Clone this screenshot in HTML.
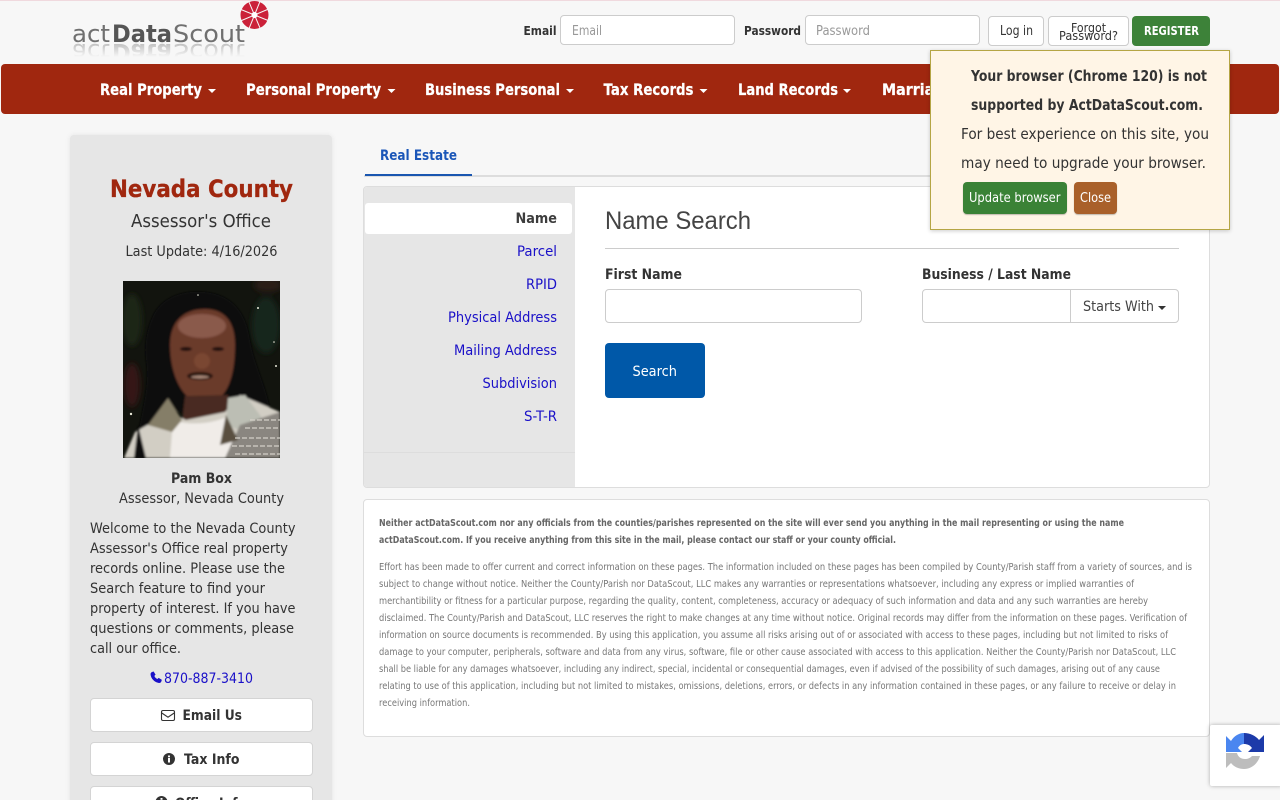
<!DOCTYPE html>
<html lang="en">
<head>
<meta charset="utf-8">
<title>actDataScout - Nevada County</title>
<style>
html,body{margin:0;padding:0;width:1280px;height:800px;overflow:hidden;background:#f7f7f7}
#page{position:relative;width:1280px;height:800px;overflow:hidden;background:#f7f7f7}
.b{position:absolute;box-sizing:border-box}
svg{position:absolute;left:0;top:0}
text{font-family:"DejaVu Sans","Liberation Sans",sans-serif;fill:#333}
.s{font-weight:bold}
.nav text{font-size:16px;font-weight:bold;fill:#fff;stroke:#fff;stroke-width:.25px}
.lnk{fill:#1a10c8;font-size:14px}
.d{font-size:9.5px;fill:#777}
.db{font-size:9.5px;font-weight:bold;fill:#666}
.p{font-size:14px}
.lg{font-size:24px;fill:#707070}
</style>
</head>
<body>
<div id="page">
<div class="b" style="left:0;top:0;width:1280px;height:1px;background:#f0d9de"></div>
<div class="b" style="left:1px;top:64px;width:1278px;height:50px;background:#a0270f;border-radius:4px"></div>

<div class="b" style="left:560px;top:15px;width:175px;height:30px;background:#fff;border:1px solid #ccc;border-radius:4px"></div>
<div class="b" style="left:805px;top:15px;width:175px;height:30px;background:#fff;border:1px solid #ccc;border-radius:4px"></div>
<div class="b" style="left:988px;top:16px;width:56px;height:30px;background:#fff;border:1px solid #ccc;border-radius:4px"></div>
<div class="b" style="left:1048px;top:16px;width:81px;height:30px;background:#fff;border:1px solid #ccc;border-radius:4px"></div>
<div class="b" style="left:1132px;top:16px;width:78px;height:30px;background:#3d8239;border-radius:4px"></div>

<div class="b" style="left:70px;top:135px;width:262px;height:680px;background:#e6e6e6;border-radius:4px;box-shadow:0 0 6px rgba(0,0,0,.08)"></div>
<div class="b" style="left:90px;top:698px;width:223px;height:34px;background:#fff;border:1px solid #d4d4d4;border-radius:4px"></div>
<div class="b" style="left:90px;top:742px;width:223px;height:34px;background:#fff;border:1px solid #d4d4d4;border-radius:4px"></div>
<div class="b" style="left:90px;top:786px;width:223px;height:34px;background:#fff;border:1px solid #d4d4d4;border-radius:4px"></div>

<div class="b" style="left:364px;top:175px;width:845px;height:2px;background:#ddd"></div>
<div class="b" style="left:365px;top:174px;width:107px;height:2px;background:#1a56b0"></div>

<div class="b" style="left:363px;top:186px;width:847px;height:302px;background:#fff;border:1px solid #ddd;border-radius:4px;overflow:hidden">
  <div class="b" style="left:0;top:0;width:211px;height:300px;background:#e6e6e6"></div>
  <div class="b" style="left:1px;top:16px;width:207px;height:31px;background:#fff;border-radius:3px"></div>
  <div class="b" style="left:0;top:265px;width:211px;height:1px;background:#ddd"></div>
</div>
<div class="b" style="left:605px;top:248px;width:574px;height:1px;background:#ccc"></div>
<div class="b" style="left:605px;top:289px;width:257px;height:34px;background:#fff;border:1px solid #ccc;border-radius:4px"></div>
<div class="b" style="left:922px;top:289px;width:257px;height:34px;background:#fff;border:1px solid #ccc;border-radius:4px"></div>
<div class="b" style="left:1070px;top:289px;width:1px;height:34px;background:#ccc"></div>
<div class="b" style="left:605px;top:343px;width:100px;height:55px;background:#0058a8;border-radius:4px"></div>

<div class="b" style="left:363px;top:499px;width:847px;height:238px;background:#fff;border:1px solid #ddd;border-radius:4px"></div>

<svg width="1280" height="800" viewBox="0 0 1280 800" xmlns="http://www.w3.org/2000/svg">
<defs>
<linearGradient id="fade" gradientUnits="userSpaceOnUse" x1="0" y1="43" x2="0" y2="29">
<stop offset="0" stop-color="#777" stop-opacity=".45"/><stop offset="1" stop-color="#777" stop-opacity="0"/>
</linearGradient>
<clipPath id="ph"><rect x="123" y="281" width="157" height="177"/></clipPath>
<filter id="bl" x="-10%" y="-10%" width="120%" height="120%"><feGaussianBlur stdDeviation="1"/></filter>
<filter id="bl2" x="-30%" y="-30%" width="160%" height="160%"><feGaussianBlur stdDeviation="3"/></filter>
</defs>

<!-- logo -->
<text class="lg" x="72" y="42" textLength="38" lengthAdjust="spacingAndGlyphs">act</text>
<text class="lg s" x="112" y="42" textLength="60" lengthAdjust="spacingAndGlyphs" style="fill:#555">Data</text>
<text class="lg" x="173" y="42" textLength="72" lengthAdjust="spacingAndGlyphs">Scout</text>
<g transform="translate(0,86) scale(1,-1)">
<text class="lg" x="72" y="42" textLength="38" lengthAdjust="spacingAndGlyphs" style="fill:url(#fade)">act</text>
<text class="lg s" x="112" y="42" textLength="60" lengthAdjust="spacingAndGlyphs" style="fill:url(#fade)">Data</text>
<text class="lg" x="173" y="42" textLength="72" lengthAdjust="spacingAndGlyphs" style="fill:url(#fade)">Scout</text>
</g>
<g transform="translate(254.5,15)">
<circle r="14" fill="#cb2139"/>
<g stroke="#f7f7f7" stroke-width="1">
<path d="M0 -15V15M-15 0H15M-10.600 -10.600L10.600 10.600M-10.600 10.600L10.600 -10.600" transform="rotate(22)"/>
</g>
<circle r="3" fill="#fff"/>
</g>

<!-- login -->
<text class="s" x="523.5" y="35" font-size="12" textLength="33" lengthAdjust="spacingAndGlyphs">Email</text>
<text x="572" y="35" font-size="13" style="fill:#999" textLength="30" lengthAdjust="spacingAndGlyphs">Email</text>
<text class="s" x="744" y="35" font-size="12" textLength="57" lengthAdjust="spacingAndGlyphs">Password</text>
<text x="816" y="35" font-size="13" style="fill:#999" textLength="54" lengthAdjust="spacingAndGlyphs">Password</text>
<text x="1000" y="35" font-size="13" textLength="33" lengthAdjust="spacingAndGlyphs">Log in</text>
<text x="1071" y="32" font-size="12" textLength="35" lengthAdjust="spacingAndGlyphs">Forgot</text>
<text x="1059" y="40" font-size="12" textLength="59" lengthAdjust="spacingAndGlyphs">Password?</text>
<text class="s" x="1144" y="35" font-size="12" style="fill:#fff" textLength="55" lengthAdjust="spacingAndGlyphs">REGISTER</text>

<!-- nav -->
<g class="nav">
<text x="100" y="95" textLength="102" lengthAdjust="spacingAndGlyphs">Real Property</text>
<text x="246" y="95" textLength="135" lengthAdjust="spacingAndGlyphs">Personal Property</text>
<text x="425" y="95" textLength="135" lengthAdjust="spacingAndGlyphs">Business Personal</text>
<text x="603.5" y="95" textLength="90" lengthAdjust="spacingAndGlyphs">Tax Records</text>
<text x="738" y="95" textLength="100" lengthAdjust="spacingAndGlyphs">Land Records</text>
<text x="882" y="95" textLength="72" lengthAdjust="spacingAndGlyphs">Marriage</text>
</g>
<g fill="#fff">
<path d="M208 89h8l-4 4z"/><path d="M387.500 89h8l-4 4z"/><path d="M566 89h8l-4 4z"/><path d="M699.500 89h8l-4 4z"/><path d="M843 89h8l-4 4z"/>
</g>

<!-- sidebar -->
<text class="s" x="110" y="197" font-size="24" style="fill:#a0270f;stroke:#a0270f;stroke-width:.3px" textLength="183" lengthAdjust="spacingAndGlyphs">Nevada County</text>
<text x="131" y="227" font-size="18" textLength="140" lengthAdjust="spacingAndGlyphs">Assessor's Office</text>
<text class="p" x="125.500" y="256" textLength="152" lengthAdjust="spacingAndGlyphs">Last Update: 4/16/2026</text>

<g clip-path="url(#ph)">
<rect x="123" y="281" width="157" height="177" fill="#12140e"/>
<g filter="url(#bl2)">
<ellipse cx="132" cy="320" rx="10" ry="26" fill="#1c2618"/>
<ellipse cx="266" cy="325" rx="14" ry="28" fill="#18261a"/>
<ellipse cx="132" cy="385" rx="8" ry="22" fill="#351812"/>
<ellipse cx="268" cy="285" rx="14" ry="7" fill="#2a1a12"/>
</g>
<g filter="url(#bl)">
<path d="M155 312C165 296 185 290 205 292C232 295 246 312 250 340C254 365 266 385 270 410L232 420L170 410L150 440L136 445C142 410 150 385 146 360C144 340 148 325 155 312Z" fill="#07070a"/>
<path d="M170 345C170 320 185 309 205 309C225 309 235 322 235 345C235 375 228 402 205 404C183 404 170 375 170 345Z" fill="#6a3a2a"/>
<ellipse cx="202" cy="326" rx="24" ry="12" fill="#8a5a4c"/>
<ellipse cx="186" cy="349" rx="6" ry="2" fill="#1e0f0c"/>
<ellipse cx="218" cy="349" rx="6" ry="2" fill="#1e0f0c"/>
<ellipse cx="202" cy="361" rx="8" ry="8" fill="#7a4632"/>
<ellipse cx="200" cy="376" rx="13" ry="4" fill="#2c1210"/>
<ellipse cx="200" cy="377" rx="9" ry="1.500" fill="#a88878"/>
<path d="M185 396L228 395L232 418L182 422Z" fill="#4a2a20"/>
<path d="M124 458L135 432L170 412L186 420L225 412L240 395L280 412V458Z" fill="#d2cec4"/>
<path d="M173 420C190 426 215 424 230 415L236 458H170Z" fill="#f0ece8"/>
<path d="M168 398L182 420L172 432L148 425Z" fill="#857e68"/>
<path d="M228 398L245 395L262 418L240 430L226 425Z" fill="#bcbeb4"/>
<path d="M240 425L280 412V458H225Z" fill="#8a8680"/>
<path d="M226 415L238 440L220 445Z" fill="#5a5040"/>
<path d="M138 425L146 458H134Z" fill="#0a0a0a"/>
</g>
<g stroke="#d8d4cc" stroke-width="1.500" stroke-dasharray="5 2" opacity=".8">
<path d="M235 438H280M232 446H280M235 454H280M245 428H280M250 420H280"/>
</g>
<g fill="#e8e8d8"><circle cx="198" cy="295" r=".8"/><circle cx="258" cy="308" r="1"/><circle cx="276" cy="366" r="1"/><circle cx="274" cy="342" r=".8"/><circle cx="131" cy="414" r="1.200"/></g>
</g>

<text class="s p" x="171" y="483" textLength="61" lengthAdjust="spacingAndGlyphs">Pam Box</text>
<text class="p" x="119" y="503" textLength="165" lengthAdjust="spacingAndGlyphs">Assessor, Nevada County</text>
<text class="p" x="90" y="533" textLength="205.500" lengthAdjust="spacingAndGlyphs">Welcome to the Nevada County</text>
<text class="p" x="90" y="553" textLength="198" lengthAdjust="spacingAndGlyphs">Assessor's Office real property</text>
<text class="p" x="90" y="573" textLength="195" lengthAdjust="spacingAndGlyphs">records online. Please use the</text>
<text class="p" x="90" y="593" textLength="175" lengthAdjust="spacingAndGlyphs">Search feature to find your</text>
<text class="p" x="90" y="613" textLength="205.500" lengthAdjust="spacingAndGlyphs">property of interest. If you have</text>
<text class="p" x="90" y="633" textLength="204" lengthAdjust="spacingAndGlyphs">questions or comments, please</text>
<text class="p" x="90" y="653" textLength="91" lengthAdjust="spacingAndGlyphs">call our office.</text>

<path d="M151.500 672.500l2-.8 1.800 3-1.200 1.200c.6 1.500 1.700 2.700 3.300 3.400l1.200-1.200 3 1.800-.8 2.200c-.4.500-1.200.7-2 .6-4.500-.8-7.700-4.200-8-8.500 0-.7.200-1.300.7-1.700z" fill="#1a10c8" stroke="#1a10c8" stroke-width=".5"/>
<text class="lnk" x="164" y="683" textLength="89" lengthAdjust="spacingAndGlyphs">870-887-3410</text>

<g fill="none" stroke="#333" stroke-width="1.100">
<rect x="161.500" y="710.500" width="13" height="10" rx="1.500"/>
<path d="M161.800 713l6.200 4.200 6.200-4.200"/>
</g>
<text class="s p" x="182.500" y="720" textLength="59.500" lengthAdjust="spacingAndGlyphs">Email Us</text>
<circle cx="169" cy="759" r="6" fill="#333"/>
<rect x="168" y="758" width="2" height="4.500" fill="#fff"/><rect x="168" y="755.500" width="2" height="1.800" fill="#fff"/>
<text class="s p" x="184" y="764" textLength="55.500" lengthAdjust="spacingAndGlyphs">Tax Info</text>
<circle cx="161.500" cy="802" r="6" fill="#333"/>
<rect x="160.500" y="798" width="2" height="1.800" fill="#fff"/>
<text class="s p" x="175" y="808" textLength="71" lengthAdjust="spacingAndGlyphs">Office Info</text>

<!-- tabs -->
<text class="s p" x="380" y="160" style="fill:#1a56b8" textLength="77" lengthAdjust="spacingAndGlyphs">Real Estate</text>

<!-- side menu -->
<text class="s p" x="515.500" y="223" style="fill:#3d3d3d" textLength="41.500" lengthAdjust="spacingAndGlyphs">Name</text>
<text class="lnk" x="517" y="256" textLength="40" lengthAdjust="spacingAndGlyphs">Parcel</text>
<text class="lnk" x="526" y="289" textLength="31" lengthAdjust="spacingAndGlyphs">RPID</text>
<text class="lnk" x="448" y="322" textLength="109" lengthAdjust="spacingAndGlyphs">Physical Address</text>
<text class="lnk" x="454" y="355" textLength="103" lengthAdjust="spacingAndGlyphs">Mailing Address</text>
<text class="lnk" x="482.500" y="388" textLength="74.500" lengthAdjust="spacingAndGlyphs">Subdivision</text>
<text class="lnk" x="524" y="421" textLength="33" lengthAdjust="spacingAndGlyphs">S-T-R</text>

<!-- form -->
<text x="605" y="229" textLength="146" lengthAdjust="spacingAndGlyphs" style="font-family:'Liberation Sans',sans-serif;font-size:25px;fill:#444">Name Search</text>
<text class="s p" x="605" y="279" textLength="77" lengthAdjust="spacingAndGlyphs">First Name</text>
<text class="s p" x="922" y="279" textLength="149" lengthAdjust="spacingAndGlyphs">Business / Last Name</text>
<text class="p" x="1083" y="311" style="fill:#444" textLength="71" lengthAdjust="spacingAndGlyphs">Starts With</text>
<path d="M1158 306h8l-4 4z" fill="#333"/>
<text class="p" x="632.500" y="376" style="fill:#fff" textLength="44.500" lengthAdjust="spacingAndGlyphs">Search</text>

<!-- disclaimer -->
<text class="db" x="379" y="526" textLength="745" lengthAdjust="spacingAndGlyphs">Neither actDataScout.com nor any officials from the counties/parishes represented on the site will ever send you anything in the mail representing or using the name</text>
<text class="db" x="379" y="543" textLength="517" lengthAdjust="spacingAndGlyphs">actDataScout.com. If you receive anything from this site in the mail, please contact our staff or your county official.</text>
<text class="d" x="379" y="570" textLength="813" lengthAdjust="spacingAndGlyphs">Effort has been made to offer current and correct information on these pages. The information included on these pages has been compiled by County/Parish staff from a variety of sources, and is</text>
<text class="d" x="379" y="587" textLength="755" lengthAdjust="spacingAndGlyphs">subject to change without notice. Neither the County/Parish nor DataScout, LLC makes any warranties or representations whatsoever, including any express or implied warranties of</text>
<text class="d" x="379" y="604" textLength="769" lengthAdjust="spacingAndGlyphs">merchantibility or fitness for a particular purpose, regarding the quality, content, completeness, accuracy or adequacy of such information and data and any such warranties are hereby</text>
<text class="d" x="379" y="621" textLength="808" lengthAdjust="spacingAndGlyphs">disclaimed. The County/Parish and DataScout, LLC reserves the right to make changes at any time without notice. Original records may differ from the information on these pages. Verification of</text>
<text class="d" x="379" y="638" textLength="789" lengthAdjust="spacingAndGlyphs">information on source documents is recommended. By using this application, you assume all risks arising out of or associated with access to these pages, including but not limited to risks of</text>
<text class="d" x="379" y="655" textLength="797" lengthAdjust="spacingAndGlyphs">damage to your computer, peripherals, software and data from any virus, software, file or other cause associated with access to this application. Neither the County/Parish nor DataScout, LLC</text>
<text class="d" x="379" y="672" textLength="781" lengthAdjust="spacingAndGlyphs">shall be liable for any damages whatsoever, including any indirect, special, incidental or consequential damages, even if advised of the possibility of such damages, arising out of any cause</text>
<text class="d" x="379" y="689" textLength="797" lengthAdjust="spacingAndGlyphs">relating to use of this application, including but not limited to mistakes, omissions, deletions, errors, or defects in any information contained in these pages, or any failure to receive or delay in</text>
<text class="d" x="379" y="706" textLength="91" lengthAdjust="spacingAndGlyphs">receiving information.</text>
</svg>

<!-- browser warning popup -->
<div class="b" style="left:930px;top:50px;width:300px;height:180px;background:#fff5e6;border:1px solid #b5a544;box-shadow:0 1px 4px rgba(0,0,0,.2)"></div>
<div class="b" style="left:963px;top:182px;width:104px;height:32px;background:#3a8236;border-radius:4px;box-shadow:0 1px 1px rgba(0,0,0,.25)"></div>
<div class="b" style="left:1074px;top:182px;width:43px;height:32px;background:#a9602a;border-radius:4px;box-shadow:0 1px 1px rgba(0,0,0,.25)"></div>
<svg width="1280" height="800" viewBox="0 0 1280 800" xmlns="http://www.w3.org/2000/svg">
<text class="s" x="971" y="81" font-size="15" textLength="236" lengthAdjust="spacingAndGlyphs">Your browser (Chrome 120) is not</text>
<text class="s" x="971" y="110" font-size="15" textLength="232" lengthAdjust="spacingAndGlyphs">supported by ActDataScout.com.</text>
<text x="961" y="139" font-size="15" textLength="248" lengthAdjust="spacingAndGlyphs">For best experience on this site, you</text>
<text x="961" y="168" font-size="15" textLength="245" lengthAdjust="spacingAndGlyphs">may need to upgrade your browser.</text>
<text x="969" y="202" font-size="13" style="fill:#fff" textLength="91.500" lengthAdjust="spacingAndGlyphs">Update browser</text>
<text x="1080" y="202" font-size="13" style="fill:#fff" textLength="31" lengthAdjust="spacingAndGlyphs">Close</text>
</svg>

<!-- recaptcha -->
<div class="b" style="left:1210px;top:725px;width:72px;height:61px;background:#fff;border-radius:2px 0 0 2px;box-shadow:0 0 4px rgba(0,0,0,.3)"></div>
<svg width="1280" height="800" viewBox="0 0 1280 800" xmlns="http://www.w3.org/2000/svg">
<path d="M1244 733L1244 744C1241 744 1239 746 1238 748L1242 752H1226V736L1231 741C1234 736 1239 733 1244 733Z" fill="#4a86f0"/>
<path d="M1244 733C1250 733 1256 736 1259 740L1264 735V752H1248L1252 748C1250 745 1247 744 1244 744Z" fill="#1c3aa9"/>
<path d="M1226 753H1237C1238 757 1241 759 1245 759C1248 759 1250 758 1252 756H1260C1258 763 1252 769 1244 769C1239 769 1234 767 1231 763L1226 768Z" fill="#bdbdbd"/>
</svg>
</div>
</body>
</html>
